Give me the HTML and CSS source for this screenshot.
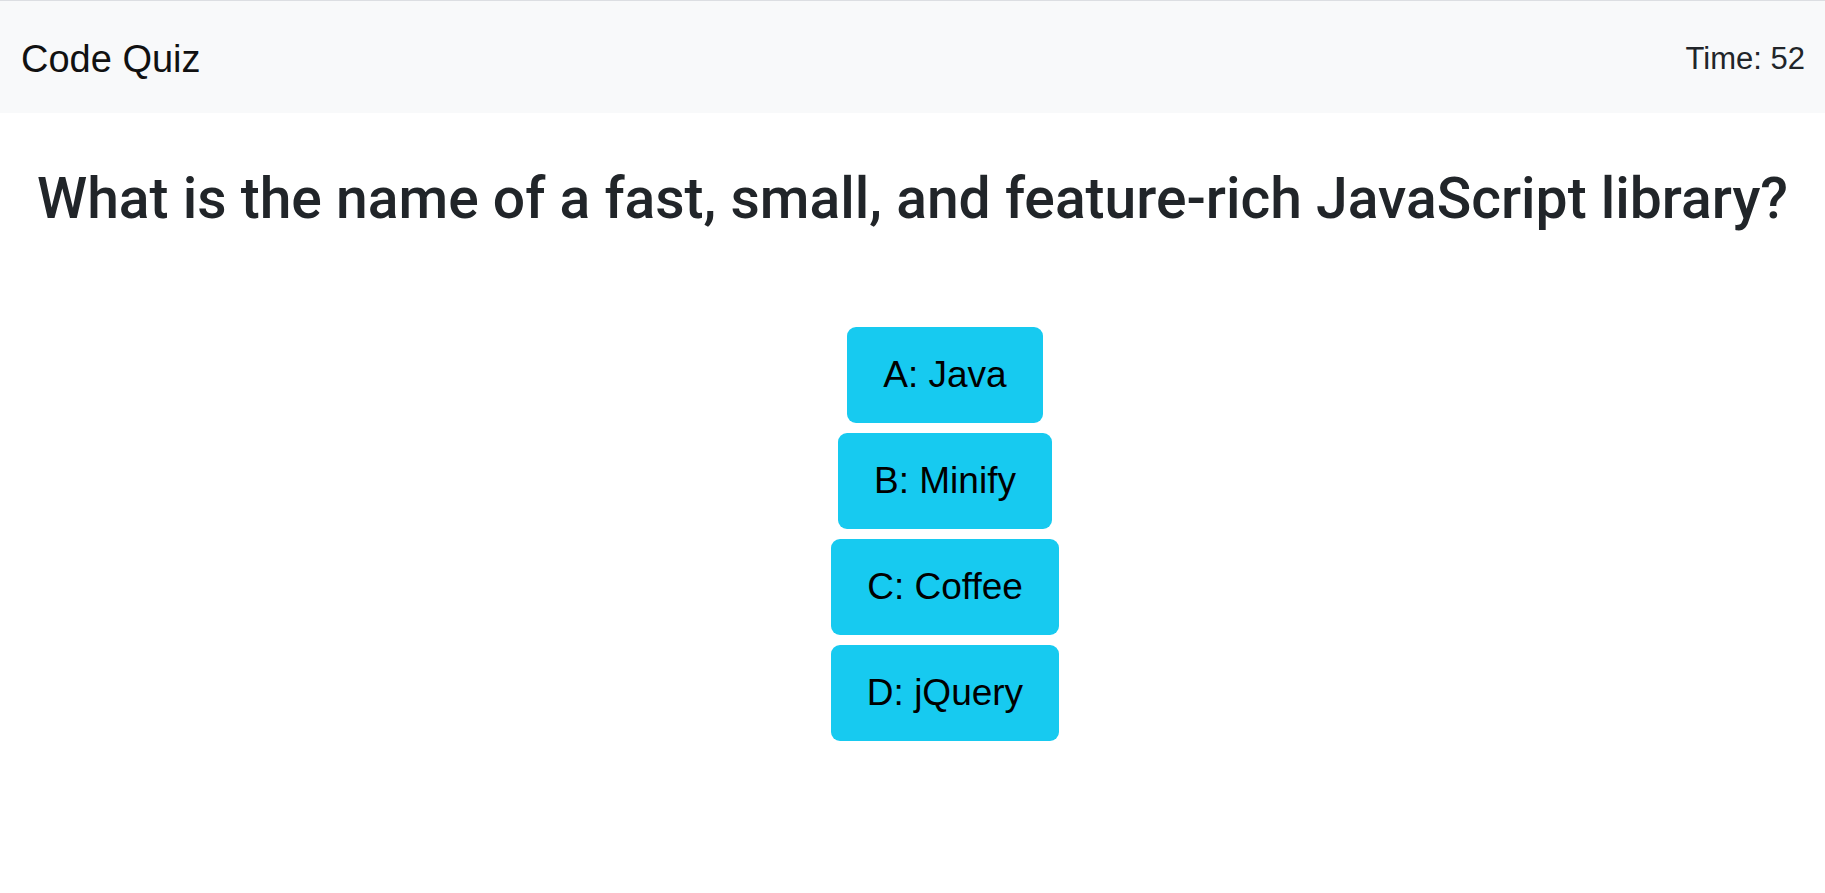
FILE: index.html
```html
<!DOCTYPE html>
<html lang="en">
<head>
<meta charset="utf-8">
<title>Code Quiz</title>
<link rel="stylesheet" href="styles.css">
</head>
<body>
<header class="navbar">
  <div class="brand">Code Quiz</div>
  <div class="timer">Time: 52</div>
</header>
<main class="quiz">
  <h1 class="question">What is the name of a fast, small, and feature-rich JavaScript library?</h1>
  <div class="choices">
    <button class="choice">A: Java</button>
    <button class="choice">B: Minify</button>
    <button class="choice">C: Coffee</button>
    <button class="choice">D: jQuery</button>
  </div>
</main>
</body>
</html>
```
FILE: styles.css
```css
html, body {
  margin: 0;
  padding: 0;
  background: #ffffff;
  color: #212529;
  font-family: "Liberation Sans", Arial, sans-serif;
}

.navbar {
  display: flex;
  justify-content: space-between;
  align-items: center;
  height: 112px;
  padding: 0 20px 0 21px;
  background: #f8f9fa;
  border-top: 1px solid #dcdee2;
}

.brand {
  font-size: 38px;
  color: #111111;
  padding-top: 5px;
}

.timer {
  font-size: 31px;
  color: #212529;
  padding-top: 3px;
}

.quiz {
  text-align: center;
}

.question {
  margin: 0;
  padding-top: 52px;
  font-family: "Roboto", "Liberation Sans", sans-serif;
  font-weight: 500;
  font-size: 57px;
  line-height: 1.2;
  white-space: nowrap;
  color: #212529;
}

.choices {
  display: flex;
  flex-direction: column;
  align-items: center;
  gap: 10px;
  margin-top: 94px;
  padding-left: 65px;
}

.choice {
  font-family: "Liberation Sans", Arial, sans-serif;
  font-size: 37px;
  line-height: 56px;
  padding: 20px 36px;
  border: 0;
  border-radius: 9px;
  background: #17caf0;
  color: #000000;
}
```
